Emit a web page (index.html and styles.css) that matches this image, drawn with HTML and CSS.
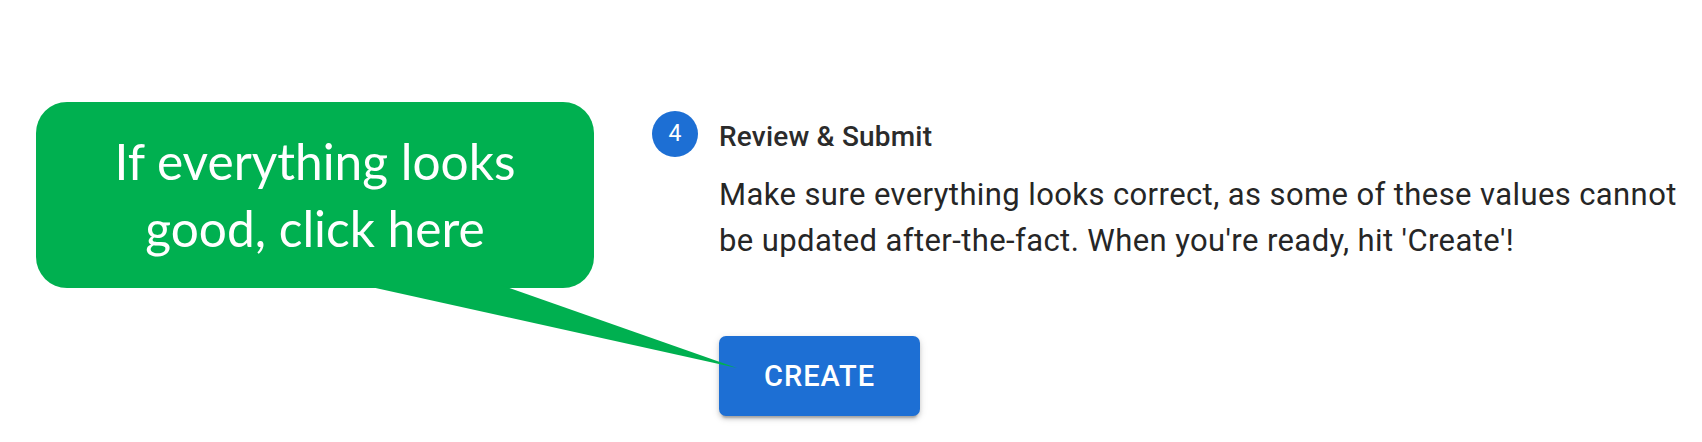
FILE: index.html
```html
<!DOCTYPE html>
<html lang="en">
<head>
<meta charset="utf-8">
<title>Review &amp; Submit</title>
<link rel="stylesheet" href="styles.css">
</head>
<body>
<main class="page">
  <section class="step">
    <div class="step-header">
      <span class="step-icon">4</span>
      <span class="step-label">Review &amp; Submit</span>
    </div>
    <div class="step-content">
      <p class="step-text">Make sure everything looks correct, as some of these values cannot<br>be updated after-the-fact. When you're ready, hit 'Create'!</p>
      <button class="btn-create" type="button">Create</button>
    </div>
  </section>

  <div class="callout">
    <p class="callout-text">If everything looks<br>good, click here</p>
  </div>
  <svg class="callout-tail" width="1702" height="442" viewBox="0 0 1702 442" aria-hidden="true">
    <polygon points="362,285 501,285 737,368" fill="#00b050"/>
  </svg>
</main>
</body>
</html>
```

FILE: styles.css
```css
* {
  box-sizing: border-box;
}

html, body {
  margin: 0;
  padding: 0;
  background: #ffffff;
}

.page {
  position: relative;
  width: 1702px;
  height: 442px;
  overflow: hidden;
  padding: 111px 0 0 652px;
  font-family: Roboto, "Liberation Sans", Arial, sans-serif;
}

.step-header {
  display: flex;
  align-items: flex-start;
  height: 46px;
}

.step-icon {
  flex: none;
  width: 46px;
  height: 46px;
  border-radius: 50%;
  background: #1d6fd4;
  color: #ffffff;
  font-size: 23px;
  line-height: 46px;
  text-align: center;
}

.step-label {
  margin-left: 21px;
  padding-top: 3px;
  font-size: 28px;
  line-height: 46px;
  font-weight: 500;
  letter-spacing: 0.2px;
  color: #2b2b2b;
}

.step-content {
  padding-left: 67px;
}

.step-text {
  margin: 15px 0 0 0;
  font-size: 31px;
  line-height: 46px;
  letter-spacing: 0.4px;
  color: #262626;
  white-space: nowrap;
}

.btn-create {
  display: block;
  margin-top: 72px;
  width: 201px;
  height: 80px;
  padding: 0;
  border: none;
  border-radius: 7px;
  background: #1d6fd4;
  color: #ffffff;
  font-family: Roboto, "Liberation Sans", Arial, sans-serif;
  font-size: 29px;
  font-weight: 500;
  letter-spacing: 1px;
  text-transform: uppercase;
  box-shadow: 0 5px 2px -3px rgba(0, 0, 0, 0.2), 0 3px 4px 0 rgba(0, 0, 0, 0.14), 0 2px 9px 0 rgba(0, 0, 0, 0.12);
}

.callout {
  position: absolute;
  left: 36px;
  top: 102px;
  width: 558px;
  height: 186px;
  border-radius: 31px;
  background: #00b050;
  padding-top: 26px;
}

.callout-text {
  margin: 0;
  font-family: Lato, "Open Sans", sans-serif;
  font-size: 49.6px;
  line-height: 67px;
  color: #ffffff;
  text-align: center;
}

.callout-tail {
  position: absolute;
  left: 0;
  top: 0;
  pointer-events: none;
}
```
